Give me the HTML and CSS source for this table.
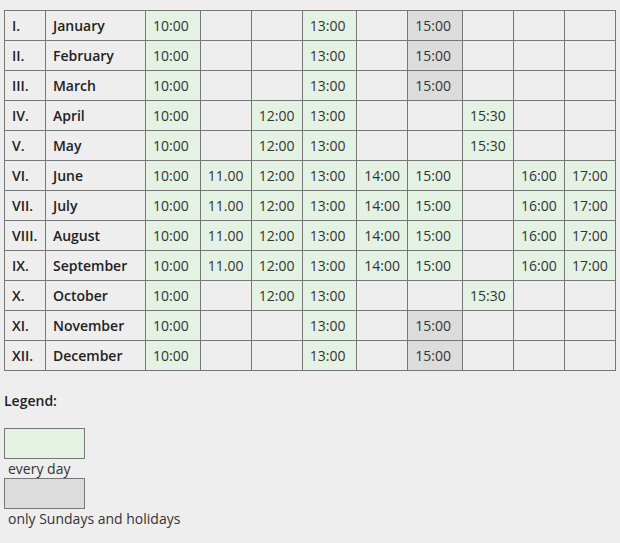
FILE: index.html
```html
<!DOCTYPE html>
<html>
<head>
<meta charset="utf-8">
<link rel="stylesheet" href="styles.css">
</head>
<body>
<table class="schedule">
  <colgroup>
    <col class="c-num"><col class="c-month"><col class="c-w"><col class="c-n"><col class="c-n"><col class="c-w"><col class="c-n"><col class="c-w"><col class="c-n"><col class="c-n"><col class="c-n">
  </colgroup>
  <tbody>
    <tr><td class="num">I.</td><td class="month">January</td><td class="d">10:00</td><td></td><td></td><td class="d">13:00</td><td></td><td class="h">15:00</td><td></td><td></td><td></td></tr>
    <tr><td class="num">II.</td><td class="month">February</td><td class="d">10:00</td><td></td><td></td><td class="d">13:00</td><td></td><td class="h">15:00</td><td></td><td></td><td></td></tr>
    <tr><td class="num">III.</td><td class="month">March</td><td class="d">10:00</td><td></td><td></td><td class="d">13:00</td><td></td><td class="h">15:00</td><td></td><td></td><td></td></tr>
    <tr><td class="num">IV.</td><td class="month">April</td><td class="d">10:00</td><td></td><td class="d">12:00</td><td class="d">13:00</td><td></td><td></td><td class="d">15:30</td><td></td><td></td></tr>
    <tr><td class="num">V.</td><td class="month">May</td><td class="d">10:00</td><td></td><td class="d">12:00</td><td class="d">13:00</td><td></td><td></td><td class="d">15:30</td><td></td><td></td></tr>
    <tr><td class="num">VI.</td><td class="month">June</td><td class="d">10:00</td><td class="d">11.00</td><td class="d">12:00</td><td class="d">13:00</td><td class="d">14:00</td><td class="d">15:00</td><td></td><td class="d">16:00</td><td class="d">17:00</td></tr>
    <tr><td class="num">VII.</td><td class="month">July</td><td class="d">10:00</td><td class="d">11.00</td><td class="d">12:00</td><td class="d">13:00</td><td class="d">14:00</td><td class="d">15:00</td><td></td><td class="d">16:00</td><td class="d">17:00</td></tr>
    <tr><td class="num">VIII.</td><td class="month">August</td><td class="d">10:00</td><td class="d">11.00</td><td class="d">12:00</td><td class="d">13:00</td><td class="d">14:00</td><td class="d">15:00</td><td></td><td class="d">16:00</td><td class="d">17:00</td></tr>
    <tr><td class="num">IX.</td><td class="month">September</td><td class="d">10:00</td><td class="d">11.00</td><td class="d">12:00</td><td class="d">13:00</td><td class="d">14:00</td><td class="d">15:00</td><td></td><td class="d">16:00</td><td class="d">17:00</td></tr>
    <tr><td class="num">X.</td><td class="month">October</td><td class="d">10:00</td><td></td><td class="d">12:00</td><td class="d">13:00</td><td></td><td></td><td class="d">15:30</td><td></td><td></td></tr>
    <tr><td class="num">XI.</td><td class="month">November</td><td class="d">10:00</td><td></td><td></td><td class="d">13:00</td><td></td><td class="h">15:00</td><td></td><td></td><td></td></tr>
    <tr><td class="num">XII.</td><td class="month">December</td><td class="d">10:00</td><td></td><td></td><td class="d">13:00</td><td></td><td class="h">15:00</td><td></td><td></td><td></td></tr>
  </tbody>
</table>
<div class="legend">
  <div class="legend-title">Legend:</div>
  <div class="swatch swatch-daily"></div>
  <div class="legend-text">every day</div>
  <div class="swatch swatch-holiday"></div>
  <div class="legend-text">only Sundays and holidays</div>
</div>
</body>
</html>
```

FILE: styles.css
```css
html, body {
  margin: 0;
  background: #eeeeee;
}
body {
  padding: 10px 4px 0 4px;
  font-family: "Open Sans", "Liberation Sans", sans-serif;
  font-size: 14px;
  line-height: 19px;
  color: #333333;
}
.schedule {
  border-collapse: collapse;
  table-layout: fixed;
}
.c-num { width: 41px; }
.c-month { width: 101px; }
.c-w { width: 55px; }
.c-n { width: 51px; }
.schedule td {
  border: 1px solid #777777;
  height: 30px;
  padding: 0 7px;
  box-sizing: border-box;
  text-align: left;
  vertical-align: middle;
  white-space: nowrap;
}
.schedule td.num,
.schedule td.month,
.legend-title {
  font-weight: 600;
  color: #222222;
}
.schedule td.d { background: #e4f2e4; }
.schedule td.h { background: #dcdcdc; }
.legend {
  margin-top: 20px;
}
.legend-title {
  margin-bottom: 18px;
}
.swatch {
  width: 81px;
  height: 31px;
  box-sizing: border-box;
  border: 1px solid #777777;
}
.swatch-daily { background: #e4f2e4; }
.swatch-holiday { background: #dcdcdc; }
.legend-text {
  padding-left: 4px;
}
```
